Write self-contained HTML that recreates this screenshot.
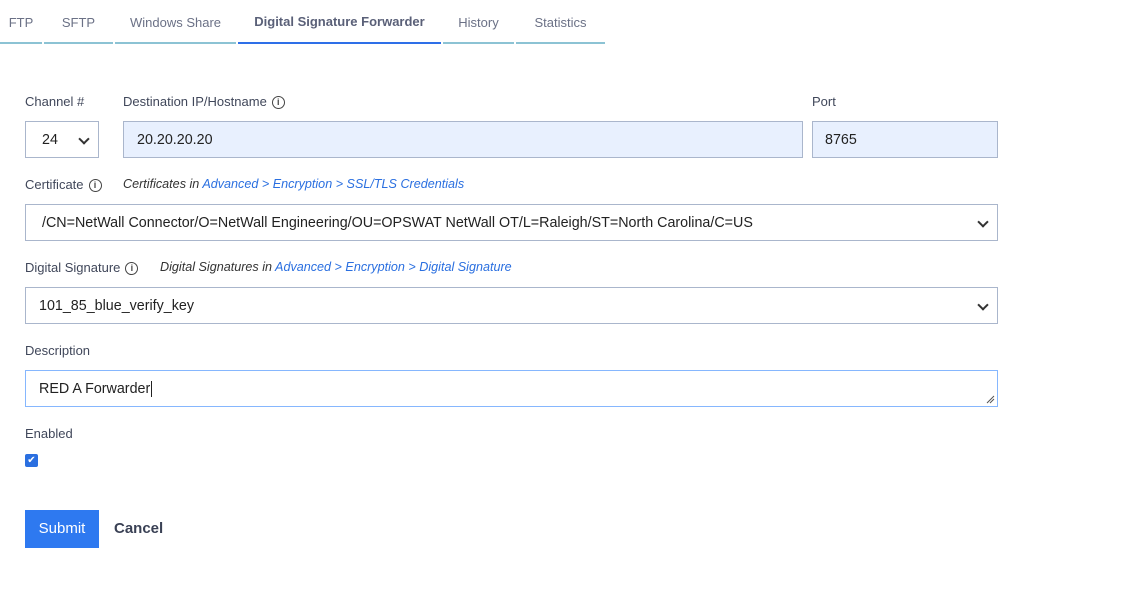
<!DOCTYPE html>
<html><head><style>
body{margin:0;background:#fff;font-family:"Liberation Sans",sans-serif;color:#333;width:1133px;height:607px;overflow:hidden;position:relative}
.a{position:absolute}
.tab{position:absolute;top:0;height:42px;border-bottom:2px solid #8cc3d4;font-size:13px;color:#6b7186;text-align:center;line-height:45px}
.lab{position:absolute;font-size:13px;color:#40475a}
.box{position:absolute;box-sizing:border-box;border:1px solid #aab6cc;height:37px;font-size:14.3px;color:#222;line-height:37px;padding-left:13px;background:#fff}
.chev{position:absolute;right:10px;top:13px;width:6px;height:6px;border-right:2px solid #333;border-bottom:2px solid #333;transform:rotate(45deg)}
.info{display:inline-block;width:11px;height:11px;border:1.3px solid #444;border-radius:50%;font-size:9px;line-height:11px;text-align:center;vertical-align:1px;margin-left:5px;font-weight:bold;color:#444}
.it{font-style:italic;font-size:12.6px;color:#333}
.it span{color:#2a6fe0}
</style></head><body>
<div class="tab" style="left:0;width:42px">FTP</div>
<div class="tab" style="left:44px;width:69px">SFTP</div>
<div class="tab" style="left:115px;width:121px">Windows Share</div>
<div class="tab" style="left:238px;width:203px;border-bottom-color:#2e6fe8;color:#5a6078;font-weight:bold;line-height:43px">Digital Signature Forwarder</div>
<div class="tab" style="left:443px;width:71px">History</div>
<div class="tab" style="left:516px;width:89px">Statistics</div>

<div class="lab" style="left:25px;top:94px">Channel #</div>
<div class="lab" style="left:123px;top:94px">Destination IP/Hostname<span class="info">i</span></div>
<div class="lab" style="left:812px;top:94px">Port</div>
<div class="box" style="left:25px;top:121px;width:74px;padding-left:16px">24<div class="chev"></div></div>
<div class="box" style="left:123px;top:121px;width:680px;background:#e8f0fe">20.20.20.20</div>
<div class="box" style="left:812px;top:121px;width:186px;background:#e8f0fe;padding-left:12px">8765</div>

<div class="lab" style="left:25px;top:177px">Certificate<span class="info">i</span></div>
<div class="a it" style="left:123px;top:177px">Certificates in <span>Advanced &gt; Encryption &gt; SSL/TLS Credentials</span></div>
<div class="box" style="left:25px;top:204px;width:973px;padding-left:16px">/CN=NetWall Connector/O=NetWall Engineering/OU=OPSWAT NetWall OT/L=Raleigh/ST=North Carolina/C=US<div class="chev"></div></div>

<div class="lab" style="left:25px;top:260px">Digital Signature<span class="info">i</span></div>
<div class="a it" style="left:160px;top:260px">Digital Signatures in <span>Advanced &gt; Encryption &gt; Digital Signature</span></div>
<div class="box" style="left:25px;top:287px;width:973px">101_85_blue_verify_key<div class="chev"></div></div>

<div class="lab" style="left:25px;top:343px">Description</div>
<div class="box" style="left:25px;top:370px;width:973px;border-color:#86b7fe">RED A Forwarder<span style="border-left:1px solid #222;margin-left:1px"></span>
<svg class="a" style="right:2px;bottom:2px" width="9" height="9"><path d="M1 8L8 1M4 8L8 4" stroke="#555" stroke-width="1"/></svg></div>

<div class="lab" style="left:25px;top:426px">Enabled</div>
<div class="a" style="left:25px;top:454px;width:13px;height:13px;background:#2a6fe0;border-radius:2px;color:#fff;font-size:10px;line-height:13px;text-align:center">✔</div>

<div class="a" style="left:25px;top:510px;width:74px;height:38px;background:#2e79f0;color:#fff;font-size:15px;line-height:38px;text-align:center">Submit</div>
<div class="a" style="left:114px;top:510px;line-height:38px;font-size:15px;font-weight:bold;color:#3a4155">Cancel</div>
</body></html>
